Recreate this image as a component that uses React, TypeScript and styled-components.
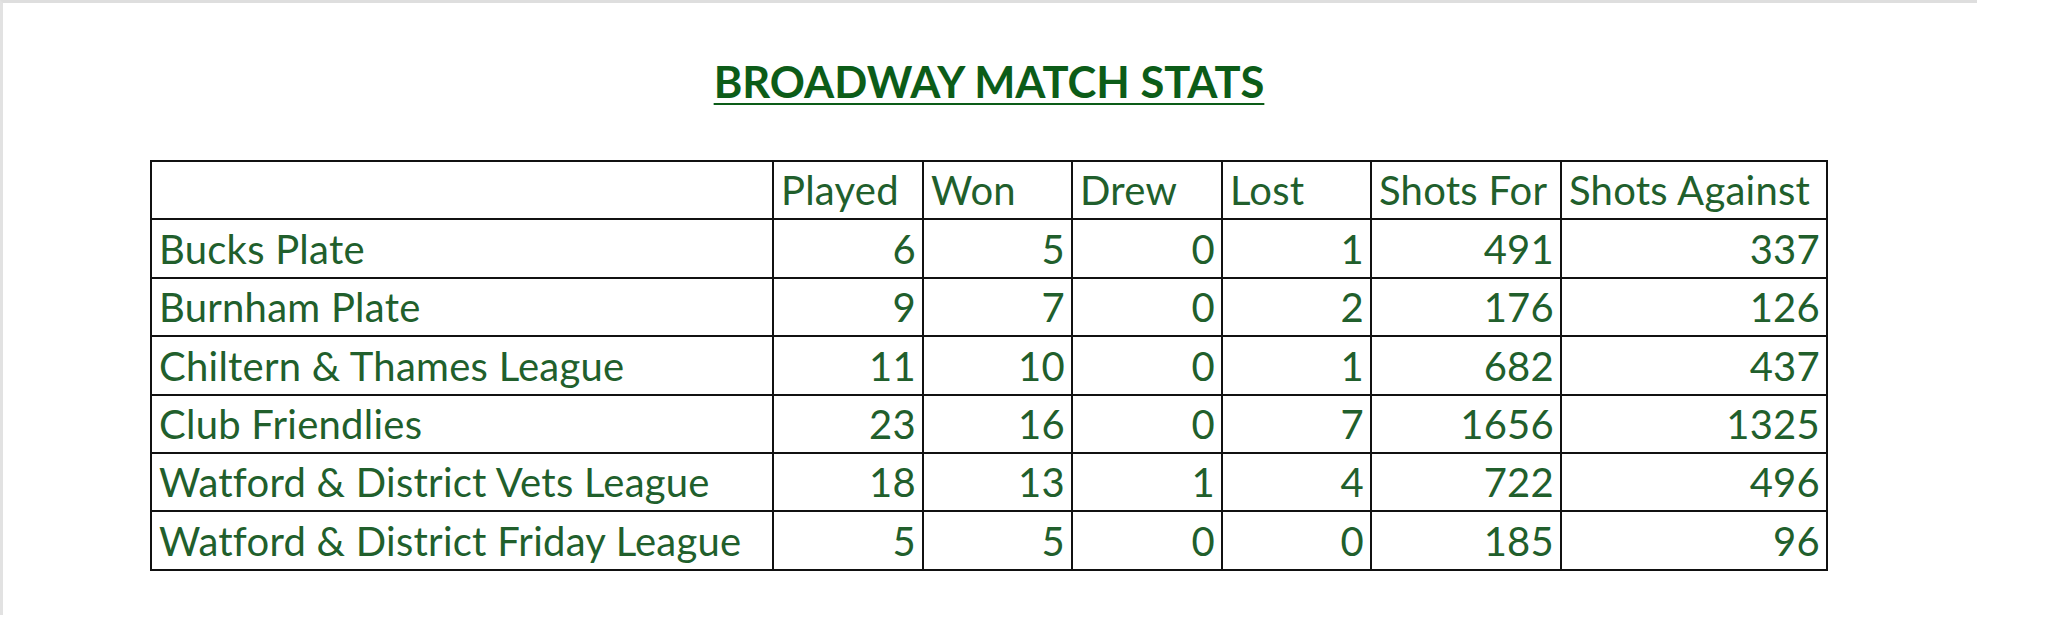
import React from "react";
import styled, { createGlobalStyle } from "styled-components";

const GlobalStyle = createGlobalStyle`
  html, body {
    margin: 0;
    padding: 0;
    background: #ffffff;
  }
  body {
    font-family: "Lato", "Noto Sans", sans-serif;
  }
`;

const Page = styled.div`
  width: 2048px;
  height: 631px;
  background: #ffffff;
  overflow: hidden;
`;

const Frame = styled.div`
  box-sizing: border-box;
  width: 1977px;
  height: 615px;
  border-top: 3px solid #dedede;
  border-left: 3px solid #e2e2e2;
  padding: 53px 0 0 147px;
`;

const Sheet = styled.div`
  width: 1678px;
  display: flex;
  flex-direction: column;
  align-items: center;
`;

const Title = styled.h1`
  margin: 0 0 54px;
  font-family: "Lato", "Noto Sans", sans-serif;
  font-weight: 700;
  font-size: 43.5px;
  line-height: 50px;
  color: #0c5c18;
  text-decoration: underline;
  text-decoration-thickness: 2px;
  text-underline-offset: 5px;
  letter-spacing: 0;
`;

const Grid = styled.div`
  align-self: stretch;
  display: grid;
  grid-template-columns: 622px 150px 149px 150px 149px 190px 266px;
  grid-auto-rows: 58.4px;
  border-top: 2px solid #111;
  border-left: 2px solid #111;
`;

const Cell = styled.div<{ $align?: "left" | "right" }>`
  box-sizing: border-box;
  border-right: 2px solid #111;
  border-bottom: 2px solid #111;
  display: flex;
  align-items: flex-end;
  justify-content: ${(p) => (p.$align === "right" ? "flex-end" : "flex-start")};
  padding: 0 6px 5px 7px;
  font-family: "Lato", "Noto Sans", sans-serif;
  font-size: 40px;
  line-height: 46px;
  letter-spacing: 0.25px;
  color: #215f2c;
  white-space: nowrap;
  overflow: hidden;
`;

const headers = ["", "Played", "Won", "Drew", "Lost", "Shots For", "Shots Against"];

const rows: [string, number, number, number, number, number, number][] = [
  ["Bucks Plate", 6, 5, 0, 1, 491, 337],
  ["Burnham Plate", 9, 7, 0, 2, 176, 126],
  ["Chiltern & Thames League", 11, 10, 0, 1, 682, 437],
  ["Club Friendlies", 23, 16, 0, 7, 1656, 1325],
  ["Watford & District Vets League", 18, 13, 1, 4, 722, 496],
  ["Watford & District Friday League", 5, 5, 0, 0, 185, 96],
];

export default function App() {
  return (
    <Page>
      <GlobalStyle />
      <Frame>
        <Sheet>
          <Title>BROADWAY MATCH STATS</Title>
          <Grid>
            {headers.map((h, i) => (
              <Cell key={`h${i}`}>{h}</Cell>
            ))}
            {rows.map((r) =>
              r.map((v, i) => (
                <Cell key={`${r[0]}-${i}`} $align={i === 0 ? "left" : "right"}>
                  {v}
                </Cell>
              ))
            )}
          </Grid>
        </Sheet>
      </Frame>
    </Page>
  );
}
